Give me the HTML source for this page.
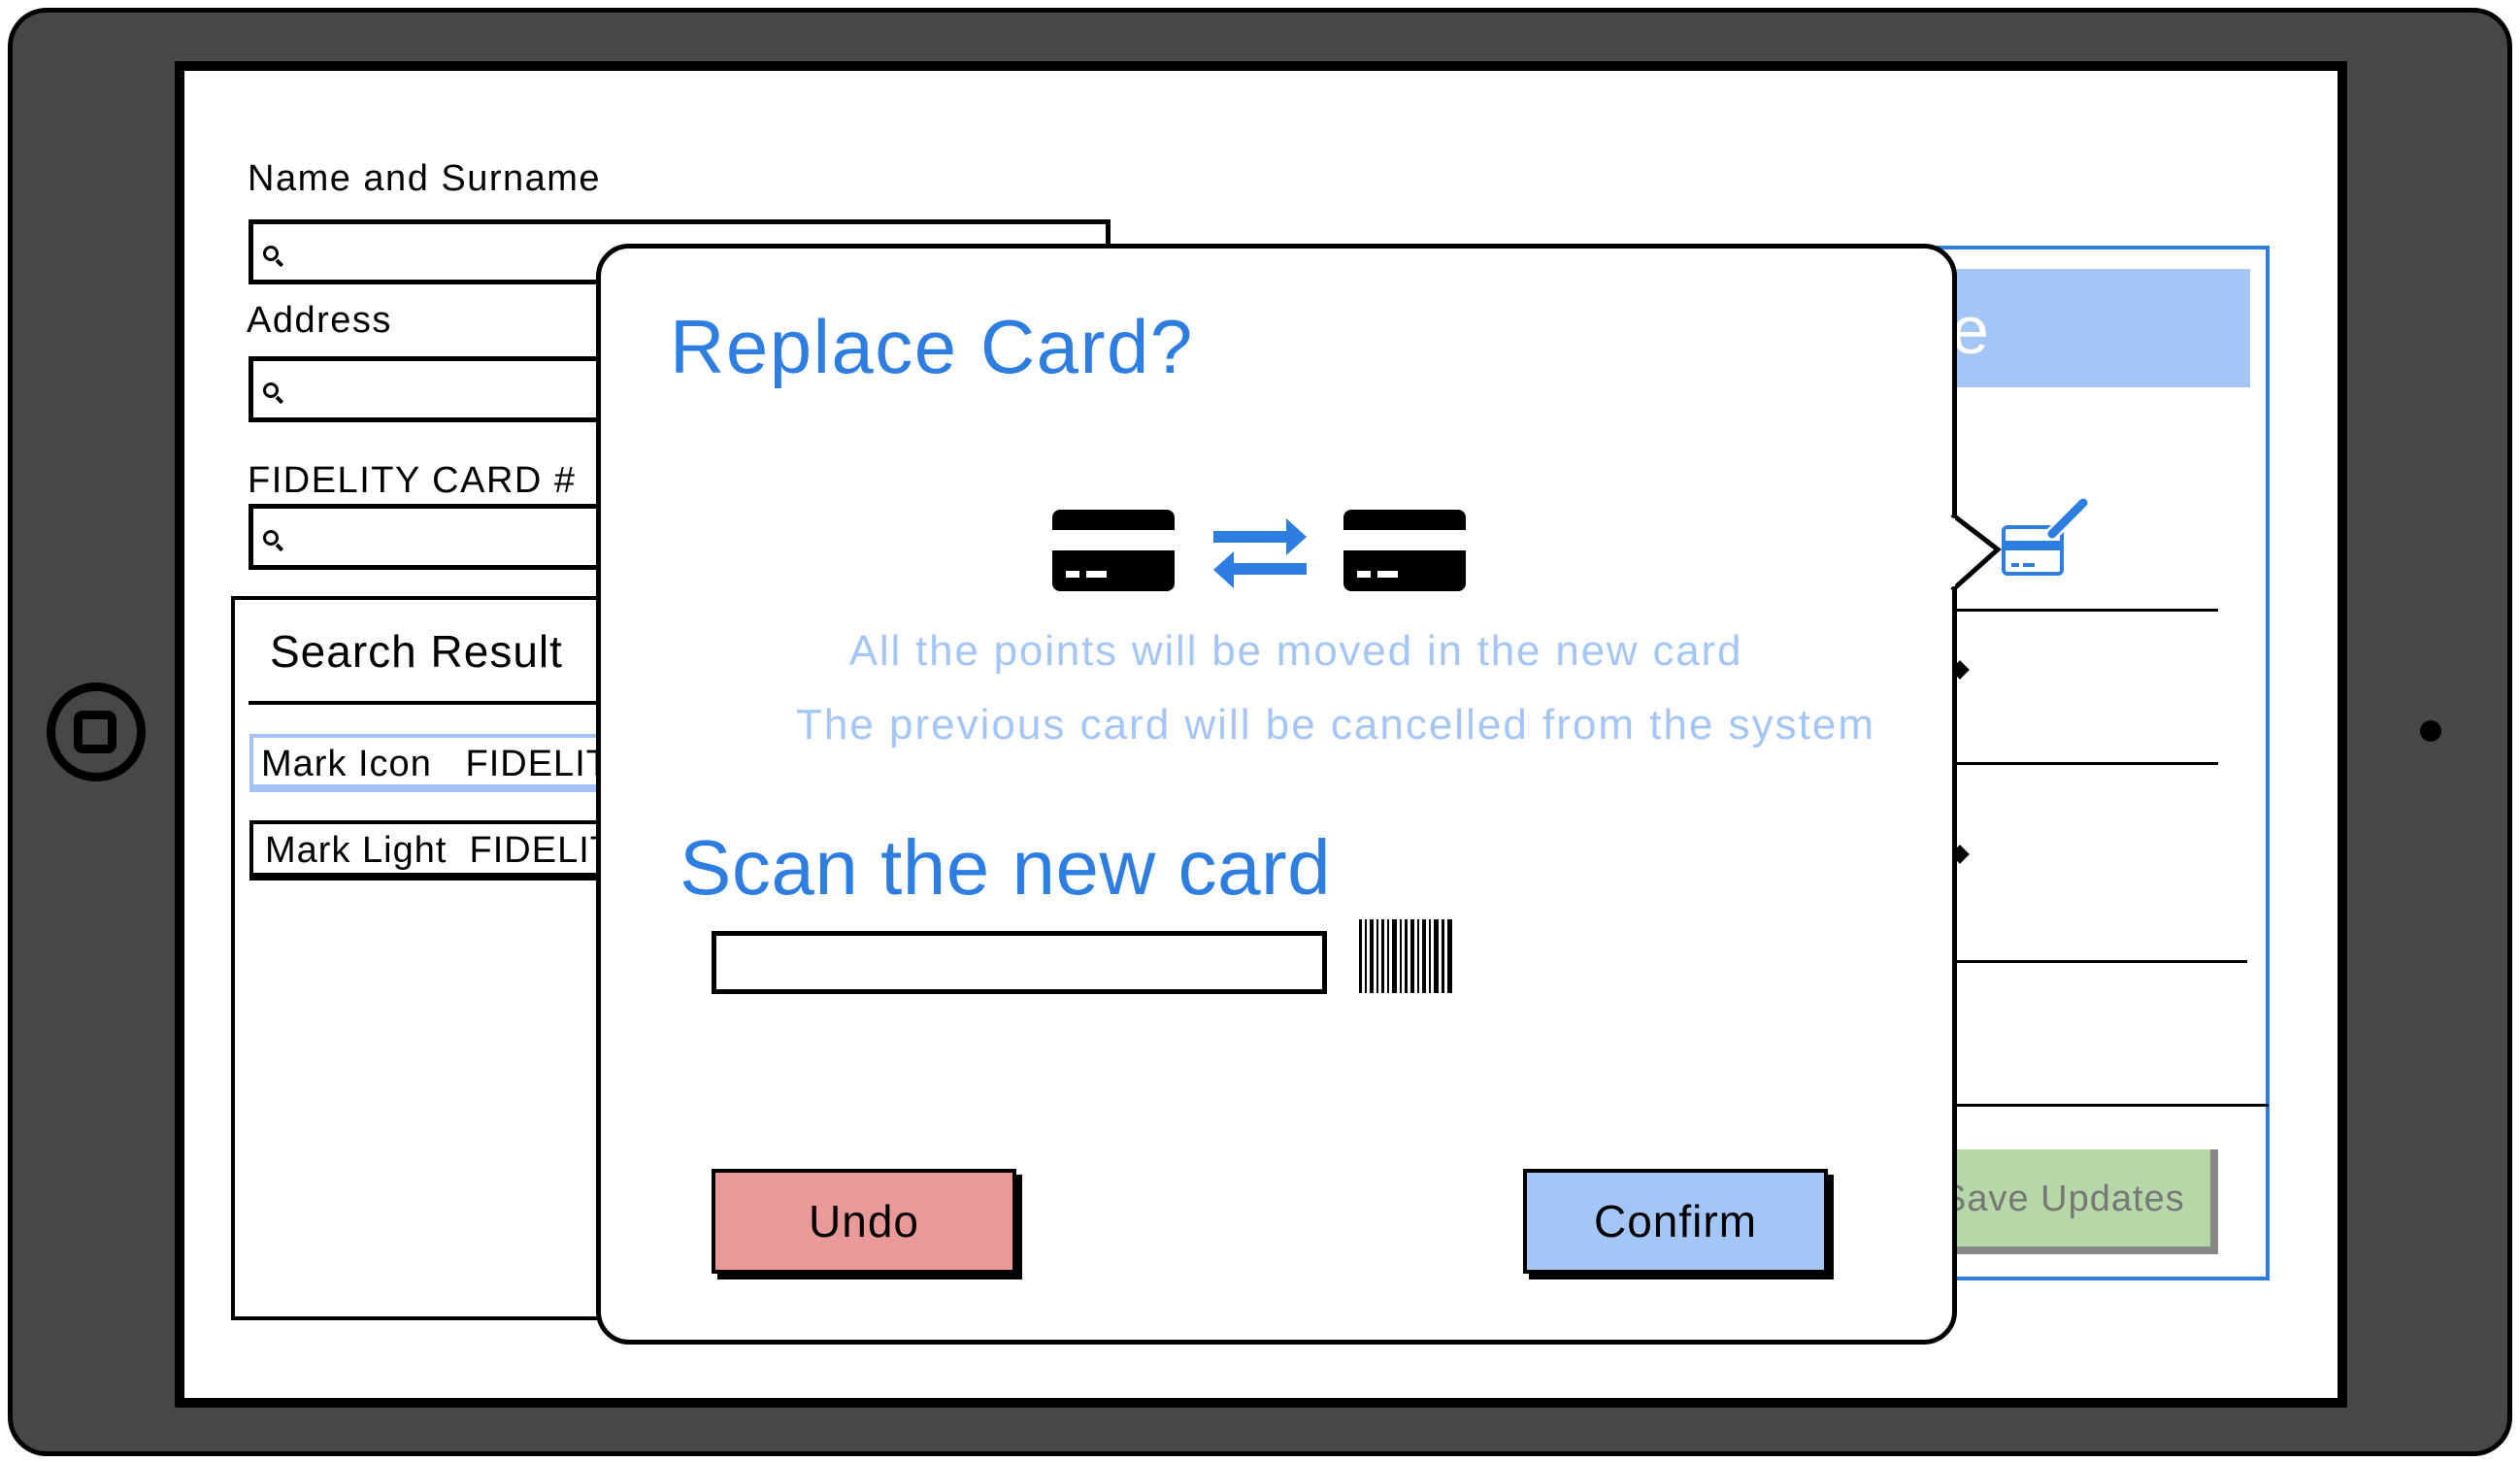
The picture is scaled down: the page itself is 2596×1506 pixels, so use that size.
<!DOCTYPE html>
<html><head><meta charset="utf-8"><style>
*{margin:0;padding:0;box-sizing:border-box}
body{width:2596px;height:1506px;background:#fff;position:relative;overflow:hidden;font-family:"Liberation Sans",sans-serif;color:#000}
.a{position:absolute}
.lbl{font-size:38px;letter-spacing:1.5px;white-space:nowrap}
.inp{border:5px solid #000;background:#fff}
.mag{position:absolute;left:10px;top:22px;width:16px;height:16px;border:3.5px solid #000;border-radius:50%}
.mag:after{content:"";position:absolute;width:8px;height:3.5px;background:#000;left:10px;top:13px;transform:rotate(45deg)}
.btn{border:4px solid #000;box-shadow:6px 6px 0 #000;font-size:46px;text-align:center;letter-spacing:1px}
</style></head><body>
<div class="a" style="left:8px;top:8px;width:2580px;height:1492px;background:#474747;border:5px solid #000;border-radius:40px"></div>
<div class="a" style="left:180px;top:63px;width:2238px;height:1387px;background:#fff;border:10px solid #000"></div>
<div class="a" style="left:48px;top:703px;width:102px;height:102px;border:9px solid #000;border-radius:50%"></div>
<div class="a" style="left:76px;top:732px;width:44px;height:44px;border:9px solid #000;border-radius:9px"></div>
<div class="a" style="left:2493px;top:742px;width:22px;height:22px;background:#000;border-radius:50%"></div>

<div class="a lbl" style="left:255px;top:163px">Name and Surname</div>
<div class="a inp" style="left:256px;top:226px;width:888px;height:67px"><div class="mag"></div></div>
<div class="a lbl" style="left:254px;top:309px">Address</div>
<div class="a inp" style="left:256px;top:367px;width:400px;height:68px"><div class="mag"></div></div>
<div class="a lbl" style="left:255px;top:474px">FIDELITY CARD #</div>
<div class="a inp" style="left:256px;top:519px;width:400px;height:68px"><div class="mag"></div></div>

<div class="a" style="left:238px;top:614px;width:420px;height:746px;border:4px solid #000;background:#fff"></div>
<div class="a" style="left:278px;top:644px;font-size:46px;letter-spacing:1px;white-space:nowrap">Search Result</div>
<div class="a" style="left:256px;top:722px;width:400px;height:4px;background:#000"></div>
<div class="a" style="left:257px;top:756px;width:400px;height:60px;border:4px solid #a4c2f4;border-bottom-width:8px;font-size:38px;padding:6px 0 0 8px;white-space:nowrap;letter-spacing:1px">Mark Icon&nbsp;&nbsp;&nbsp;FIDELITY</div>
<div class="a" style="left:257px;top:845px;width:400px;height:62px;border:4px solid #000;border-bottom-width:8px;font-size:38px;padding:6px 0 0 12px;white-space:nowrap;letter-spacing:1px">Mark Light&nbsp;&nbsp;FIDELITY</div>

<div class="a" style="left:1995px;top:253px;width:343px;height:1066px;border:4px solid #2e7de1;background:#fff"></div>
<div class="a" style="left:2004px;top:277px;width:314px;height:122px;background:#a4c6f7"></div>
<div class="a" style="left:2010px;top:300px;font-size:70px;color:#fff">e</div>
<div class="a" style="left:2015px;top:627px;width:270px;height:3px;background:#000"></div>
<div class="a" style="left:2015px;top:785px;width:270px;height:3px;background:#000"></div>
<div class="a" style="left:2015px;top:989px;width:300px;height:3px;background:#000"></div>
<div class="a" style="left:2015px;top:1137px;width:322px;height:3px;background:#000"></div>
<div class="a" style="left:2012px;top:683px;width:14px;height:14px;background:#000;transform:rotate(45deg)"></div>
<div class="a" style="left:2012px;top:873px;width:14px;height:14px;background:#000;transform:rotate(45deg)"></div>
<div class="a" style="left:2012px;top:1184px;width:273px;height:108px;background:#b6d7a8;border-right:8px solid #888;border-bottom:8px solid #888"></div>
<div class="a" style="left:2000px;top:1214px;font-size:38px;color:#777;letter-spacing:1px;white-space:nowrap">Save Updates</div>
<svg class="a" style="left:2060px;top:510px" width="96" height="84" viewBox="0 0 96 84">
<rect x="4" y="33" width="60" height="48" rx="4" fill="#fff" stroke="#2e7de1" stroke-width="4"/>
<rect x="4" y="47" width="60" height="10" fill="#2e7de1"/>
<rect x="12" y="70" width="8" height="4" fill="#2e7de1"/><rect x="24" y="70" width="12" height="4" fill="#2e7de1"/>
<path d="M54 40 L86 8" stroke="#fff" stroke-width="14"/>
<path d="M54 40 L86 8" stroke="#2e7de1" stroke-width="9" stroke-linecap="round"/>
</svg>

<div class="a" style="left:614px;top:251px;width:1402px;height:1134px;border:5px solid #000;border-radius:34px;background:#fff"></div>
<svg class="a" style="left:2008px;top:528px" width="56" height="84"><path d="M3 2 L50 38 L3 80" fill="#fff" stroke="#000" stroke-width="5"/><rect x="0" y="6" width="6" height="70" fill="#fff"/></svg>

<div class="a" style="left:690px;top:312px;font-size:78px;color:#2e7de1;letter-spacing:1.5px;white-space:nowrap">Replace Card?</div>

<svg class="a" style="left:1080px;top:520px" width="440" height="95" viewBox="0 0 440 95">
<g transform="translate(4,5)"><rect width="126" height="84" rx="8" fill="#000"/><rect y="21" width="126" height="21" fill="#fff"/><rect x="14" y="63" width="14" height="7" fill="#fff"/><rect x="35" y="63" width="21" height="7" fill="#fff"/></g>
<g transform="translate(304,5)"><rect width="126" height="84" rx="8" fill="#000"/><rect y="21" width="126" height="21" fill="#fff"/><rect x="14" y="63" width="14" height="7" fill="#fff"/><rect x="35" y="63" width="21" height="7" fill="#fff"/></g>
<path d="M170 27 H245 V14 L266 33 L245 52 V39 H170 Z" fill="#2e7de1"/>
<path d="M266 60 H191 V48 L170 67 L191 86 V72 H266 Z" fill="#2e7de1"/>
</svg>

<div class="a" style="left:0;width:2670px;top:646px;text-align:center;font-size:44px;color:#a4c6f7;letter-spacing:1.8px;white-space:nowrap">All the points will be moved in the new card</div>
<div class="a" style="left:0;width:2752px;top:722px;text-align:center;font-size:44px;color:#a4c6f7;letter-spacing:2px;white-space:nowrap">The previous card will be cancelled from the system</div>

<div class="a" style="left:700px;top:848px;font-size:80px;color:#2e7de1;letter-spacing:0.5px;white-space:nowrap">Scan the new card</div>
<div class="a" style="left:733px;top:959px;width:634px;height:65px;border:5px solid #000"></div>
<svg class="a" style="left:1400px;top:947px" width="98" height="78">
<g fill="#000"><rect x="0" width="3" height="76"/><rect x="6" width="2" height="76"/><rect x="11" width="4" height="76"/><rect x="18" width="2" height="76"/><rect x="23" width="3" height="76"/><rect x="29" width="2" height="76"/><rect x="34" width="5" height="76"/><rect x="42" width="2" height="76"/><rect x="47" width="3" height="76"/><rect x="53" width="4" height="76"/><rect x="60" width="2" height="76"/><rect x="65" width="4" height="76"/><rect x="72" width="2" height="76"/><rect x="77" width="5" height="76"/><rect x="85" width="3" height="76"/><rect x="91" width="5" height="76"/></g></svg>

<div class="a btn" style="left:733px;top:1204px;width:314px;height:108px;background:#ea9999;line-height:100px">Undo</div>
<div class="a btn" style="left:1569px;top:1204px;width:314px;height:108px;background:#a4c6f7;line-height:100px">Confirm</div>
</body></html>
